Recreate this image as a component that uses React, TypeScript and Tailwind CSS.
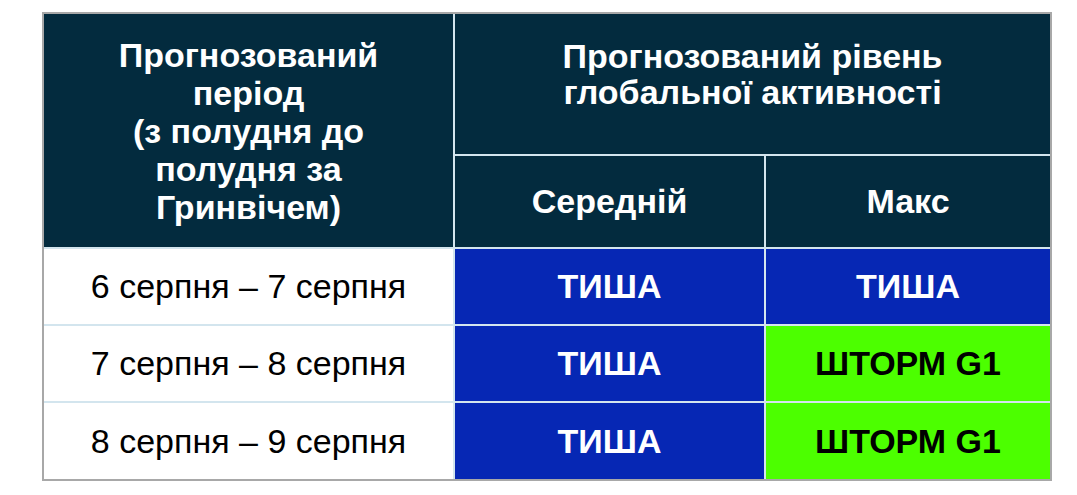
export default function App() {
  const rows = [
    { period: '6 серпня – 7 серпня', avg: 'ТИША', max: 'ТИША', storm: false },
    { period: '7 серпня – 8 серпня', avg: 'ТИША', max: 'ШТОРМ G1', storm: true },
    { period: '8 серпня – 9 серпня', avg: 'ТИША', max: 'ШТОРМ G1', storm: true },
  ];

  return (
    <main
      className="min-h-screen bg-white pt-[12px] pl-[42px]"
      style={{ fontFamily: '"Liberation Sans", Arial, sans-serif' }}
    >
      <div className="w-[1010px] border-2 border-[#a8a8a8]">
        <table className="w-full border-collapse border-hidden table-fixed">
          <colgroup>
            <col className="w-[410px]" />
            <col className="w-[311px]" />
            <col />
          </colgroup>
          <thead>
            <tr className="h-[141px]">
              <th
                rowSpan={2}
                className="border-2 border-[#d3e5ee] bg-[#032b3e] px-2 text-[34px] leading-[38px] font-bold text-white"
              >
                Прогнозований
                <br />
                період
                <br />
                (з полудня до
                <br />
                полудня за
                <br />
                Гринвічем)
              </th>
              <th
                colSpan={2}
                className="border-2 border-[#d3e5ee] bg-[#032b3e] px-2 pb-[20px] text-[34px] leading-[36px] font-bold text-white"
              >
                Прогнозований рівень
                <br />
                глобальної активності
              </th>
            </tr>
            <tr className="h-[93px]">
              <th className="border-2 border-[#d3e5ee] bg-[#032b3e] text-[34px] font-bold text-white">
                Середній
              </th>
              <th className="border-2 border-[#d3e5ee] bg-[#032b3e] text-[34px] font-bold text-white">
                Макс
              </th>
            </tr>
          </thead>
          <tbody>
            {rows.map((r) => (
              <tr key={r.period} className="h-[77px]">
                <td className="border-2 border-[#d3e5ee] bg-white text-center text-[34px] text-black">
                  {r.period}
                </td>
                <td className="border-2 border-[#d3e5ee] bg-[#0627b4] text-center text-[34px] font-bold text-white">
                  {r.avg}
                </td>
                {r.storm ? (
                  <td className="border-2 border-[#d3e5ee] bg-[#4cff00] text-center text-[34px] font-bold text-black">
                    {r.max}
                  </td>
                ) : (
                  <td className="border-2 border-[#d3e5ee] bg-[#0627b4] text-center text-[34px] font-bold text-white">
                    {r.max}
                  </td>
                )}
              </tr>
            ))}
          </tbody>
        </table>
      </div>
    </main>
  );
}
